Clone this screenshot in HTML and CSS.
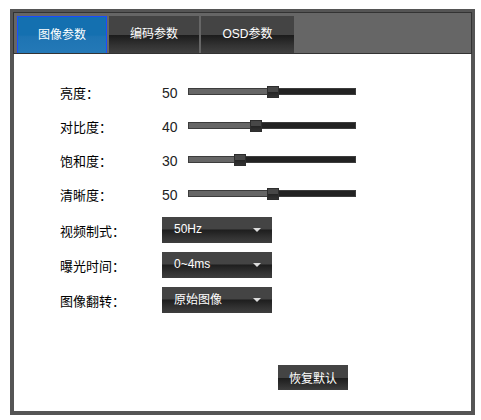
FILE: index.html
```html
<!DOCTYPE html>
<html>
<head>
<meta charset="utf-8">
<link rel="stylesheet" href="styles.css">
</head>
<body>
<div class="frame">
  <div class="header">
    <div class="tab active">图像参数</div>
    <div class="tab">编码参数</div>
    <div class="tab wide">OSD参数</div>
  </div>
  <div class="content">
    <div class="grid">
      <div class="label">亮度：</div>
      <div class="value">50</div>
      <div class="slider"><div class="fill" style="width:50%"></div><div class="thumb" style="left:50%"></div></div>

      <div class="label">对比度：</div>
      <div class="value">40</div>
      <div class="slider"><div class="fill" style="width:40%"></div><div class="thumb" style="left:40%"></div></div>

      <div class="label">饱和度：</div>
      <div class="value">30</div>
      <div class="slider"><div class="fill" style="width:30%"></div><div class="thumb" style="left:30%"></div></div>

      <div class="label">清晰度：</div>
      <div class="value">50</div>
      <div class="slider"><div class="fill" style="width:50%"></div><div class="thumb" style="left:50%"></div></div>
    </div>
    <div class="grid selects">
      <div class="label">视频制式：</div>
      <div class="select"><span>50Hz</span><i class="arrow"></i></div>

      <div class="label">曝光时间：</div>
      <div class="select"><span>0~4ms</span><i class="arrow"></i></div>

      <div class="label">图像翻转：</div>
      <div class="select"><span>原始图像</span><i class="arrow"></i></div>
    </div>
    <div class="actions">
      <div class="button">恢复默认</div>
    </div>
  </div>
</div>
</body>
</html>
```

FILE: styles.css
```css
html, body {
  margin: 0;
  padding: 0;
  background: #fff;
}
body {
  font-family: "Liberation Sans", "Noto Sans CJK SC", sans-serif;
  font-size: 12px;
}
.frame {
  box-sizing: border-box;
  margin: 9px 0 0 10px;
  width: 465px;
  height: 406px;
  border: 4px solid #555;
  background: #fff;
}
.header {
  display: flex;
  gap: 2px;
  box-sizing: border-box;
  height: 42px;
  margin: -1px -1px 0 -1px;
  padding: 3px 0 0 3px;
  background: #666;
  border: 1px solid #333;
}
.tab {
  box-sizing: border-box;
  width: 90px;
  height: 37px;
  display: flex;
  align-items: center;
  justify-content: center;
  padding-bottom: 4px;
  color: #fff;
  font-size: 12px;
  background: linear-gradient(to bottom, #444 0, #444 50%, #1c1c1c 52%, #333 80%, #404040 100%);
}
.tab.wide {
  width: 93px;
}
.tab.active {
  background: linear-gradient(to bottom, #1470b0 0, #1470b0 50%, #1e74b3 55%, #2479b7 100%);
  border: 1px solid #1a4cff;
  border-bottom: none;
}
.content {
  padding: 20px 0 0 46px;
}
.grid {
  display: grid;
  grid-template-columns: 102px 26px 168px;
  grid-auto-rows: 34px;
  align-items: center;
}
.selects {
  margin-top: 2px;
  grid-auto-rows: 35px;
}
.label {
  color: #000;
  font-family: "Noto Sans CJK SC", sans-serif;
  font-size: 13px;
  line-height: 15px;
  padding-top: 2px;
}
.value {
  color: #222;
  font-size: 14px;
  padding-top: 4px;
}
.slider {
  position: relative;
  box-sizing: border-box;
  height: 7px;
  background: #222;
  border: 1px solid #3c3c3c;
}
.fill {
  height: 100%;
  background: #666;
}
.thumb {
  position: absolute;
  top: -3px;
  margin-left: -5px;
  box-sizing: border-box;
  width: 12px;
  height: 12px;
  border: 1px solid #2e2e2e;
  background: linear-gradient(to bottom, #474747 0, #474747 50%, #252525 55%, #333 100%);
}
.select {
  grid-column: 2 / 4;
  position: relative;
  box-sizing: border-box;
  width: 110px;
  height: 26px;
  display: flex;
  align-items: center;
  padding: 0 0 2px 12px;
  color: #fff;
  font-size: 12px;
  background: linear-gradient(to bottom, #444 0, #444 46%, #1e1e1e 50%, #333 80%, #3e3e3e 100%);
}
.arrow {
  position: absolute;
  right: 11px;
  top: 11px;
  width: 0;
  height: 0;
  border-left: 4px solid transparent;
  border-right: 4px solid transparent;
  border-top: 4px solid #ddd;
}
.actions {
  display: flex;
  padding: 48px 0 0 218px;
}
.button {
  box-sizing: border-box;
  width: 70px;
  height: 25px;
  display: flex;
  align-items: center;
  justify-content: center;
  color: #fff;
  font-family: "Noto Sans CJK SC", sans-serif;
  font-size: 12px;
  background: linear-gradient(to bottom, #444 0, #444 50%, #1e1e1e 54%, #333 85%, #3e3e3e 100%);
}
```
